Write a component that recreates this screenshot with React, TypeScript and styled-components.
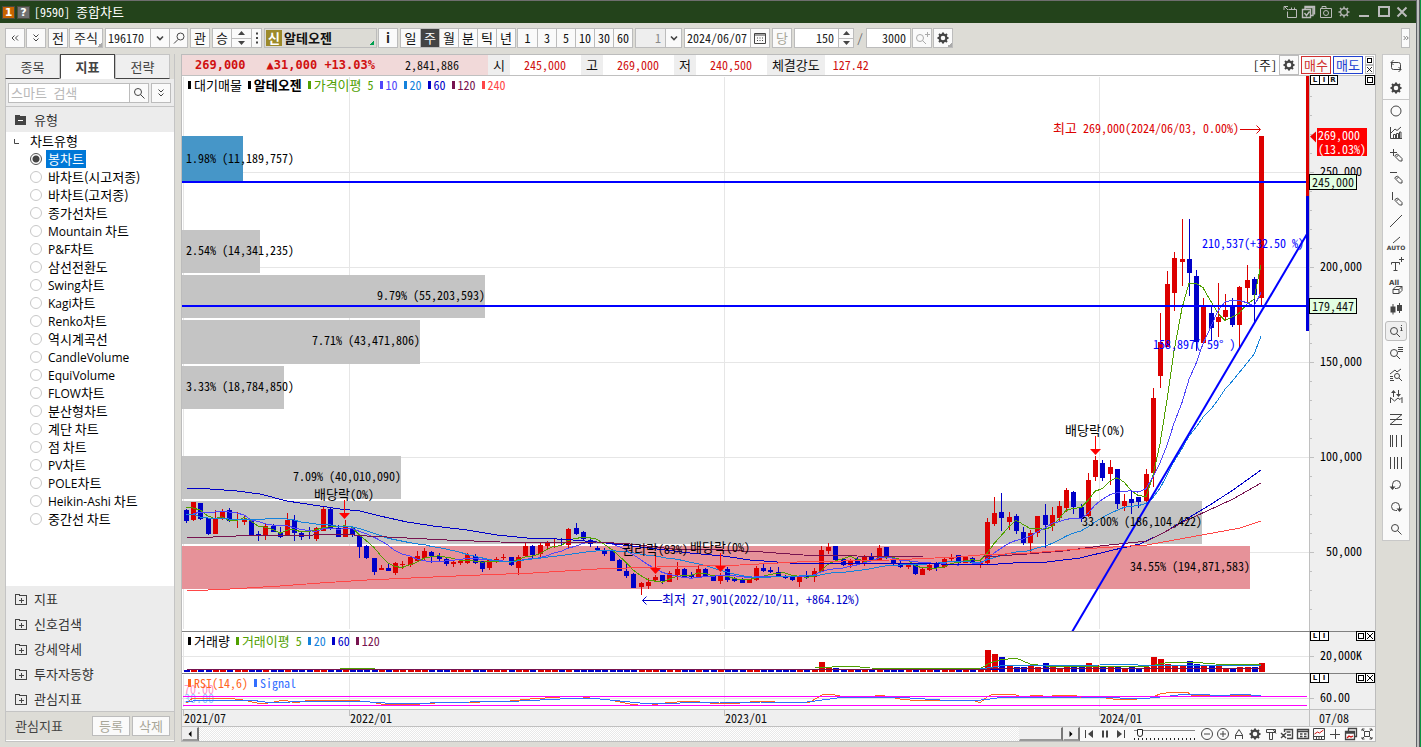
import React from 'react';
import styled, { createGlobalStyle, css } from 'styled-components';

const MONO = `"Noto Sans Mono CJK KR", "Noto Sans CJK KR", sans-serif`;
const SANS = `"Noto Sans CJK KR", "Noto Sans", sans-serif`;

const UP = '#dc0000';
const DOWN = '#0000c8';
const MA = { m5: '#50a000', m10: '#5046fa', m20: '#1482dc', m60: '#0000c8', m120: '#781450', m240: '#ff4646' };

const GlobalStyle = createGlobalStyle`
  * { box-sizing: border-box; }
  body { margin: 0; background: #dddcd6; font: 12px/16px ${MONO}; color: #111; }
  button, input { font: inherit; color: inherit; margin: 0; padding: 0; border-radius: 0; }
  svg { flex: none; overflow: visible; }
  text { font: 12px ${MONO}; white-space: pre; }
`;

const Ko = styled.span`
  font-size: 13px;
`;

/* ---------- window shell ---------- */

const Desktop = styled.div`
  display: flex;
  min-height: 100vh;
`;
const WindowBox = styled.div`
  flex: 1;
  min-width: 0;
  display: flex;
  flex-direction: column;
`;
const WindowEdge = styled.div`
  width: 5px;
  background: linear-gradient(90deg, #5f6368 0 1px, #c0c0c0 1px 3px, #55585c 3px 4px, #0a9440 4px 5px);
`;
const TitleBar = styled.header`
  display: flex;
  align-items: center;
  gap: 2px;
  height: 23px;
  padding: 0 6px 0 2px;
  border-top: 1px solid #6e6e6e;
  background: #23431b;
  color: #fff;
`;
const TitleBadge = styled.span<{ $bg: string }>`
  width: 13px;
  height: 13px;
  background: ${(p) => p.$bg};
  border: 1px solid #4a4a40;
  font: bold 11px/12px "DejaVu Sans", sans-serif;
  text-align: center;
`;
const Title = styled.h1`
  flex: 1;
  margin: 0 0 0 2px;
  font: 12px/16px ${MONO};
`;
const BareButton = styled.button<{ $w?: number }>`
  display: flex;
  align-items: center;
  justify-content: center;
  width: ${(p) => p.$w ?? 16}px;
  height: 16px;
  border: 0;
  background: none;
`;

/* ---------- toolbar ---------- */

const Toolbar = styled.div`
  display: flex;
  align-items: center;
  gap: 2px;
  height: 31px;
  padding: 0 6px 1px 5px;
`;
const Tight = styled.div`
  display: flex;
  gap: 1px;
`;
const ToolButton = styled.button<{ $w?: number; $dim?: boolean; $corner?: boolean }>`
  display: flex;
  align-items: center;
  justify-content: center;
  flex: none;
  width: ${(p) => p.$w ?? 20}px;
  height: 20px;
  border: 1px solid #bcbcbc;
  background: ${(p) =>
    p.$corner ? 'linear-gradient(135deg, transparent 50%, #aaa 50%) right bottom / 5px 5px no-repeat, #fafafa' : '#fafafa'};
  color: ${(p) => (p.$dim ? '#a8a698' : '#222')};
  font-size: 13px;
`;
const Segments = styled.div`
  display: flex;
  height: 20px;
  border: 1px solid #bcbcbc;
  background: #fafafa;
  && > * + * { border-left: 1px solid #bcbcbc; }
`;
const Segment = styled.button<{ $w?: number; $on?: boolean }>`
  display: flex;
  align-items: center;
  justify-content: center;
  width: ${(p) => p.$w ?? 19}px;
  border: 0;
  background: ${(p) => (p.$on ? '#444' : '#fafafa')};
  color: ${(p) => (p.$on ? '#fff' : '#111')};
`;
const Field = styled.input<{ $w: number; $right?: boolean; $dim?: boolean }>`
  width: ${(p) => p.$w}px;
  border: 0;
  padding: 0 ${(p) => (p.$right ? 4 : 2)}px;
  outline: 0;
  background: ${(p) => (p.$dim ? '#eee' : '#fff')};
  color: ${(p) => (p.$dim ? '#888' : '#222')};
  text-align: ${(p) => (p.$right ? 'right' : 'left')};
`;
const Spinner = styled.div<{ $w: number }>`
  display: flex;
  flex-direction: column;
  width: ${(p) => p.$w}px;
  button { flex: 1; display: flex; align-items: center; justify-content: center; border: 0; background: #fafafa; }
  button + button { border-top: 1px solid #bcbcbc; }
`;
const StockBox = styled.div`
  display: flex;
  align-items: center;
  gap: 2px;
  width: 113px;
  height: 20px;
  padding-left: 1px;
  border: 1px solid #bcbcbc;
  background: linear-gradient(135deg, transparent 50%, #00a050 50%) 105px 12px / 4px 4px no-repeat, #dcdbd5;
  font-size: 13px;
  font-weight: bold;
`;
const NewBadge = styled.span`
  width: 16px;
  height: 16px;
  background: #9c8a2a;
  color: #fff;
  text-align: center;
`;
const Slash = styled.span`
  width: 8px;
  text-align: center;
  color: #666;
`;
const Spring = styled.div`
  flex: 1;
`;

/* ---------- body ---------- */

const Body = styled.div`
  flex: 1;
  display: flex;
  align-items: stretch;
  gap: 6px;
  padding: 0 6px 5px 5px;
`;
const Sidebar = styled.aside`
  display: flex;
  flex-direction: column;
  width: 170px;
  border: 1px solid #c4c4c4;
  border-top: 0;
  font-size: 13px;
`;
const Tabs = styled.div`
  display: flex;
  height: 25px;
  margin: 0 4px 0 -1px;
`;
const Tab = styled.button<{ $on?: boolean }>`
  flex: 1;
  border: 1px solid ${(p) => (p.$on ? '#444' : '#c4c4c4')};
  border-bottom-color: ${(p) => (p.$on ? '#fff' : '#444')};
  background: ${(p) => (p.$on ? '#fff' : '#efefef')};
  color: #444;
  ${(p) => p.$on && css`font-weight: bold;`}
`;
const SearchRow = styled.div`
  display: flex;
  gap: 2px;
  padding: 4px 2px 3px;
  border-bottom: 1px solid #c4c4c4;
  background: #ececec;
  input::placeholder { color: #b8b8b8; opacity: 1; }
`;
const GroupButton = styled.button`
  display: flex;
  align-items: center;
  gap: 7px;
  width: 100%;
  height: 25px;
  padding-left: 9px;
  border: 0;
  background: #ececec;
  color: #333;
`;
const Tree = styled.div`
  flex: 1;
  padding: 0 0 0 24px;
  background: #fff;
  font: 13px/18px ${SANS};
  color: #000;
`;
const TreeRoot = styled.div`
  display: flex;
  align-items: center;
  gap: 11px;
  height: 18px;
  margin-left: -16px;
`;
const TreeItem = styled.label`
  display: flex;
  align-items: center;
  gap: 4px;
  height: 18px;
  > span { padding: 0 2px; white-space: pre; }
  input:checked + span { background: #0078d7; color: #fff; }
`;
const Latin = styled.span`
  font: 12px/16px "Open Sans", sans-serif;
`;
const Radio = styled.input`
  appearance: none;
  width: 12px;
  height: 12px;
  border: 1px solid #c8c8c8;
  border-radius: 50%;
  &:checked { border-color: #555; background: radial-gradient(circle, #444 0 3px, #fff 4px); }
`;
const SideFooter = styled.div`
  display: flex;
  align-items: center;
  gap: 2px;
  height: 30px;
  padding: 0 4px 0 9px;
  border-top: 1px solid #c4c4c4;
  border-bottom: 1px solid #fff;
  color: #444;
`;

/* ---------- chart ---------- */

const ChartFrame = styled.main`
  flex: 1;
  min-width: 0;
  display: flex;
  flex-direction: column;
  border: 1px solid #bcbcbc;
  background: #fff;
`;
const InfoBar = styled.div`
  display: flex;
  align-items: center;
  height: 21px;
  border-bottom: 1px solid #c0c0c0;
`;
const Quote = styled.div`
  display: flex;
  align-items: center;
  gap: 21px;
  width: 306px;
  height: 20px;
  padding-left: 13px;
  background: #f1d9d9;
  b { font: bold 12px/20px "DejaVu Sans Mono", monospace; color: #d01010; }
  span { margin-left: 9px; }
`;
const InfoLabel = styled.div`
  height: 20px;
  padding: 0 5px;
  background: #eee;
  font-size: 13px;
  line-height: 20px;
`;
const InfoValue = styled.div<{ $w?: number }>`
  width: ${(p) => p.$w ?? 71}px;
  padding-right: 15px;
  text-align: right;
  color: #d01010;
`;
const OrderButton = styled.button<{ $c: string }>`
  width: 30px;
  height: 18px;
  border: 1px solid ${(p) => p.$c};
  background: #fafafa;
  color: ${(p) => p.$c};
  font-size: 13px;
`;
const InfoTools = styled.div`
  display: flex;
  align-items: center;
  gap: 2px;
  margin-left: auto;
  padding-right: 1px;
`;
const MiniStack = styled.div`
  display: flex;
  flex-direction: column;
  button { display: flex; width: 9px; height: 9px; border: 1px solid #bcbcbc; background: #fff; align-items: center; justify-content: center; }
`;
const Pane = styled.section<{ $h?: number }>`
  position: relative;
  display: flex;
  ${(p) => (p.$h ? css`height: ${p.$h}px;` : css`flex: 1; min-height: 555px;`)}
  border-bottom: 1px solid ${(p) => (p.$h === 36 ? '#c0c0c0' : '#808080')};
`;
const Plot = styled.div`
  position: relative;
  flex: 1;
  min-width: 0;
  overflow: hidden;
  > svg { position: absolute; width: 100%; height: 100%; }
`;
const Axis = styled.div`
  position: relative;
  width: 66px;
  border-left: 1px solid #c0c0c0;
  background: #efefef;
  > svg { display: block; width: 100%; height: 100%; }
`;
const Legend = styled.div`
  position: absolute;
  top: 1px;
  left: 6px;
  display: flex;
  gap: 6px;
`;
const LegendItem = styled.span<{ $c: string; $bold?: boolean }>`
  display: flex;
  align-items: center;
  gap: 3px;
  color: ${(p) => p.$c};
  font-weight: ${(p) => (p.$bold ? 'bold' : 'normal')};
  white-space: pre;
  &::before { content: ''; width: 3px; height: 8px; background: currentColor; }
`;
const PaneButtons = styled.div<{ $right?: boolean }>`
  position: absolute;
  top: -1px;
  ${(p) => (p.$right ? 'right: 0;' : 'left: 0;')}
  display: flex;
  button {
    display: flex;
    align-items: center;
    justify-content: center;
    width: 10px;
    height: 10px;
    border: 1px solid #000;
    background: #fff;
    font: bold 7px/8px "DejaVu Sans", sans-serif;
  }
  button + button { margin-left: -1px; }
`;
const LevelTag = styled.span<{ $y: number }>`
  position: absolute;
  left: -1px;
  top: ${(p) => p.$y}px;
  height: 16px;
  padding: 0 2px;
  border: 1px solid #000;
  background: #e2ffe2;
  line-height: 14px;
`;
const LastTag = styled.span`
  position: absolute;
  left: 7px;
  top: 52px;
  width: 50px;
  padding: 0 1px;
  background: #f00;
  color: #fff;
  line-height: 14px;
`;
const DateRow = styled.div`
  display: flex;
  height: 17px;
  border-bottom: 1px solid #c0c0c0;
  background: #efefef;
`;
const DateTicks = styled.div`
  position: relative;
  flex: 1;
`;
const DateLabel = styled.span<{ $x: number }>`
  position: absolute;
  left: ${(p) => p.$x}px;
  padding-left: 1px;
  &::before { content: ''; position: absolute; left: 0; top: 0; width: 1px; height: 6px; background: #c0c0c0; }
`;
const DateEnd = styled.div`
  width: 66px;
  padding-left: 9px;
  border-left: 1px solid #c0c0c0;
`;
const ScrollRow = styled.div`
  display: flex;
  align-items: stretch;
  height: 14px;
  background: #fff;
`;
const ScrollButton = styled.button<{ $w: number }>`
  display: flex;
  align-items: center;
  justify-content: center;
  width: ${(p) => p.$w}px;
  border: 1px solid #eee;
  border-right: 2px solid #777;
  border-bottom: 2px solid #999;
  background: #efefef;
`;
const Track = styled.div`
  flex: 1;
  background: repeating-conic-gradient(#e8e8e8 0 25%, #fff 0 50%) 0 0 / 2px 2px;
`;
const BottomTools = styled.div`
  display: flex;
  align-items: center;
  width: 295px;
  padding-left: 1px;
  background: #fafafa;
`;
const RangeBox = styled.div`
  width: 62px;
  height: 14px;
  margin: 0 4px 0 5px;
  background:
    repeating-linear-gradient(90deg, #222 0 1px, transparent 1px 4px) 0 11px / 100% 2px no-repeat,
    linear-gradient(#888, #888) 0 3px / 100% 1px no-repeat;
  input {
    appearance: none;
    display: block;
    width: 100%;
    height: 9px;
    margin: 1px 0 0;
    background: none;
  }
  input::-webkit-slider-thumb {
    appearance: none;
    width: 6px;
    height: 8px;
    border: 1px solid #222;
    border-radius: 0 0 3px 3px;
    background: #fff;
  }
`;
const RightBar = styled.nav`
  align-self: flex-start;
  display: flex;
  flex-direction: column;
  width: 28px;
  border: 1px solid #c8c8c8;
  background: #fafafa;
`;
const RightButton = styled.button<{ $on?: boolean; $line?: boolean }>`
  display: flex;
  align-items: center;
  justify-content: center;
  height: ${(p) => (p.$line ? 23 : 22)}px;
  border: 0;
  border-bottom: ${(p) => (p.$line ? '1px solid #c8c8c8' : '0')};
  background: none;
  ${(p) =>
    p.$on &&
    css`
      margin: 1px 2px;
      height: 20px;
      border: 1px solid #bcbcbc;
      border-radius: 3px;
      background: #efefef;
    `}
`;

/* ---------- icons ---------- */

type IconProps = { d: string; fill?: string; size?: number; color?: string; w?: number; children?: React.ReactNode };
const Icon = ({ d, fill, size = 16, color = '#444', w = 1, children }: IconProps) => (
  <svg width={size} height={size} viewBox="0 0 16 16" fill="none" stroke={color} strokeWidth={w} aria-hidden="true">
    <path d={d} />
    {fill && <path d={fill} fill={color} stroke="none" />}
    {children}
  </svg>
);
const GEAR = 'M8 2.5v2M8 11.5v2M2.5 8h2M11.5 8h2M4 4l1.5 1.5M10.500 10.500l1.500 1.500M12 4l-1.500 1.500M5.500 10.500l-1.500 1.500';
const Gear = ({ color = '#444', thin }: { color?: string; thin?: boolean }) => (
  <Icon d={GEAR} color={color} w={thin ? 1.5 : 2}>
    <circle cx="8" cy="8" r="3.400" strokeWidth={thin ? 1.2 : 2.2} />
  </Icon>
);
const Caret = ({ down }: { down?: boolean }) => (
  <svg width="7" height="4" viewBox="0 0 7 4" aria-hidden="true">
    <path d={down ? 'M0 0h7L3.500 4z' : 'M0 4h7L3.500 0z'} fill="#444" />
  </svg>
);
const MAG = 'M10.500 7a3.500 3.500 0 1 1-7 0a3.500 3.500 0 1 1 7 0zM9.500 9.500l4 4';
const MAG_LOW = 'M9.500 8a3.500 3.500 0 1 1-7 0a3.500 3.500 0 1 1 7 0zM8.500 10.500l3.500 3.500';
const PEN = 'M7 8.500l2.500-1.500l4.500 4.500v2.500h-2.500l-4.500-4.500zM8.500 10l2-2';
const FolderPlus = () => (
  <svg width="12" height="12" viewBox="0 0 12 12" fill="none" stroke="#444" shapeRendering="crispEdges" aria-hidden="true">
    <path d="M.5 1.500h4v1h7v9H.5zM3.500 7h5M6 4.500v5" />
  </svg>
);

const rightTools: { name: string; node: React.ReactNode; line?: boolean; on?: boolean }[] = [
  { name: '새로고침', node: <Icon d="M3.500 5v4.500q0 2 2 2H13M10.500 9l2.500 2.500l-2.500 2.500M12.500 11V6.500q0-2-2-2H3M5.500 2L3 4.500L5.500 7" /> },
  { name: '설정', node: <Gear />, line: true },
  { name: '원', node: <Icon d="M13 8a5 5 0 1 1-10 0a5 5 0 1 1 10 0z" /> },
  { name: '차트', node: <Icon d="M2.500 2v11.500H14M3 8l4-4l2 1.500L13 2M5.500 13V9.500h2V13M8.500 13V8.500h2V13M11.500 13V7h1.500v6" /> },
  { name: '추가', node: <Icon d={`M2 5.500h7M5.500 2v7${PEN}`} /> },
  { name: '수평', node: <Icon d={`M2 3.500h7${PEN}`} /> },
  { name: '수직', node: <Icon d={`M4.500 1v8${PEN}`} /> },
  { name: '추세선', node: <Icon d="M2 14L14 2" /> },
  {
    name: '자동',
    node: (
      <Icon d="M5 8l7-6">
        <text x="8" y="15" textAnchor="middle" fill="#444" stroke="none" style={{ font: 'bold 6px "DejaVu Sans", sans-serif' }}>AUTO</text>
      </Icon>
    ),
  },
  { name: '문자', node: <Icon d="M3.500 7.500V5.500h8v2M7.500 5.500v8M5.500 13.500h4M11 2.500h5M13.500 0v5" /> },
  {
    name: '전체 지우기',
    node: (
      <Icon d="M5 10.500l3-3h6l-3 3zM5 10.500v4h6l3-3v-4M11 10.500v4">
        <text x="1" y="6" fill="#444" stroke="none" style={{ font: 'bold 7px "DejaVu Sans", sans-serif' }}>All</text>
      </Icon>
    ),
  },
  { name: '봉', node: <Icon d="M5 3v10.500M11.500 2v10" fill="M2.500 5.500h5v6h-5zM9 4h5v6H9z" /> },
  { name: '정보', node: <Icon d={`${MAG_LOW}M13.500 2v1M12.500 4.500h1v3M12.500 7.500h2`} />, on: true },
  { name: '목록', node: <Icon d={`${MAG_LOW}M10 2.500h5M10 4.500h5M10 6.500h5`} /> },
  { name: '분석', node: <Icon d="M2 7l5-4l2 2l4-3M2 9.500h3M2 11.500h3M2 13.500h4M11.500 9a2.500 2.500 0 1 1-5 0a2.500 2.500 0 1 1 5 0zM11 11l3 3" /> },
  { name: '전환', node: <Icon d="M2.500 14V8.500l4 3.500l3.500-3l2 1.500l2-2V14" fill="M5 8V4H3l2.500-3L8 4H6v4zM10 1h1v4h2l-2.500 3L8 5h2z" /> },
  { name: '피보나치', node: <Icon d="M2 3.500h12L2 13.500h12M2 8.500h12" /> },
  { name: '간격 1', node: <Icon d="M2.500 2v12M4.500 2v12M8.500 2v12M13.500 2v12" /> },
  { name: '간격 2', node: <Icon d="M2.500 2v12M6.500 2v12M9.500 2v12M13.500 2v12" /> },
  { name: '실행 취소', node: <Icon d="M4.500 10V7.500a4 4 0 1 1 4 4H7" fill="M1.500 9.500h6l-3 3.500z" /> },
  { name: '다시 실행', node: <Icon d="M11.500 10V7.500a4 4 0 1 0-4 4H9" fill="M8.500 9.500h6l-3 3.500z" /> },
  { name: '확대', node: <Icon d={MAG} /> },
];

const bottomTools: { name: string; node: React.ReactNode }[] = [
  { name: '축소', node: <Icon d="M13.500 8a5.500 5.500 0 1 1-11 0a5.500 5.500 0 1 1 11 0zM5 8h6" /> },
  { name: '확대', node: <Icon d="M13.500 8a5.500 5.500 0 1 1-11 0a5.500 5.500 0 1 1 11 0zM5 8h6M8 5v6" /> },
  { name: '글자', node: <Icon d="M4.500 13V9L8 3.500L11.500 9v4M4.500 9.500h7" /> },
  { name: '설정', node: <Gear /> },
  { name: '꾸미기', node: <Icon d="M3.500 6.500v-3h9v3h-9M10 3.500l3 4M6.500 6.500v7h3v-7" /> },
  { name: '내보내기', node: <Icon d="M5.500 6V3.500h8v9H8M7.500 6h4M8 9h4M2 7l5 5M7 7l-5 5" w={1.4} /> },
  { name: '목록', node: <Icon d="M2.500 3.500h11v9h-11zM2.500 5.500h11M5 8h2.500M5 10.500h2.500M9 8h2.500M9 10.500h2.500" w={1.4} /> },
  {
    name: '차트',
    node: (
      <Icon d="M2.500 2.500h11v11h-11zM2.500 10.500h11M5.500 11v2M8 11v2M10.500 11v2">
        <path d="M3.500 8l3-2l2 1l4-3" stroke="#d01010" />
      </Icon>
    ),
  },
  { name: '십자선', node: <Icon d="M3 8.500h10M8.500 3v10" /> },
  {
    name: '창',
    node: (
      <Icon d="M5.500 5V2.500h8v8H12M2.500 5.500h9v8h-9zM2.500 7h9" w={1.300}>
        <path d="M4 12l2-2l2 1l2-1" stroke="#d01010" />
      </Icon>
    ),
  },
  { name: '전체 화면', node: <Icon d="M3 5V3h2.500M10.500 3H13v2M13 11v2h-2.500M5.500 13H3v-2M5.500 5.500h5v5h-5zM3 3l2.500 2.500M13 3l-2.500 2.500M3 13l2.500-2.500M13 13l-2.500-2.500" /> },
];

/* ---------- data ---------- */

const treeItems = [
  '봉차트', '바차트(시고저종)', '바차트(고저종)', '종가선차트', 'Mountain 차트', 'P&F차트', '삼선전환도',
  'Swing차트', 'Kagi차트', 'Renko차트', '역시계곡선', 'CandleVolume', 'EquiVolume', 'FLOW차트',
  '분산형차트', '계단 차트', '점 차트', 'PV차트', 'POLE차트', 'Heikin-Ashi 차트', '중간선 차트',
];
const groups = ['지표', '신호검색', '강세약세', '투자자동향', '관심지표'];

/* Weekly candles: u/d, body top, body bottom, high, low, in ticks (3 per pixel) below each block's base line. */
const TICKS_PER_PX = 3;
const candleBlocks: { base: number; rows: string }[] = [
  {
    base: 440,
    rows: `d 210 242 207 248;u 186 240 186 242;d 189 237 189 239;d 234 282 234 285;u 234 282 210 282;u 213 237 207 240;
d 210 242 205 246;u 238 241 216 264;u 237 246 228 255;d 237 287 237 287;d 282 286 273 303;u 258 287 252 300;
d 258 276 252 276;d 276 291 261 294;u 240 287 219 287;d 240 279 225 303;d 279 291 273 300;d 270 273 261 297;
u 264 297 261 303;u 207 272 198 272;d 207 267 201 270;d 264 291 255 291;u 258 291 240 291;d 265 284 258 291;
d 285 321 282 354;d 318 354 315 357;d 354 396 354 405;u 384 390 375 390;d 384 393 369 393;u 369 399 366 405;
u 372 375 363 387;u 351 376 348 381;u 348 363 333 366;u 333 354 324 360;d 336 348 333 369;d 347 357 339 363;
d 357 372 350 378;u 366 372 360 381;u 363 370 360 375;u 345 369 339 372;d 348 370 342 372;d 363 387 363 396;
u 360 384 357 390;u 358 366 351 369;u 351 354 342 360;d 351 375 351 378;u 351 384 345 405;u 318 348 309 351;
d 318 346 315 354;u 315 342 306 351;u 310 319 303 330;u 306 310 297 324;d 306 310 294 315;u 267 315 264 324;
d 264 282 249 285;d 276 297 273 300;d 300 312 297 321`,
  },
  {
    base: 480,
    rows: `d 205 210 198 214;d 210 222 205 227;d 213 243 213 243;d 240 272 237 273;d 273 287 252 294;d 282 324 280 324;
u 309 321 306 345;u 306 318 294 327;u 291 300 285 306;d 285 303 285 312;u 279 306 273 306;u 267 285 246 300;
d 267 291 264 293;d 284 290 276 294;u 267 291 258 293;d 267 288 264 291;d 285 303 285 303;u 285 303 280 312;
d 267 300 261 306;d 294 302 291 306;d 300 309 295 309;u 297 309 297 309;u 264 300 258 303;d 264 273 252 277;
d 270 276 262 280;d 276 287 261 287;d 288 294 285 298;d 288 300 286 304;u 288 306 285 321;d 288 291 273 297;
u 273 291 264 306;u 210 276 198 276;u 201 213 189 222;d 198 240 198 242;d 237 255 234 258;u 240 255 237 264;
d 237 249 231 252;u 231 252 226 258;d 228 240 219 242;u 204 243 195 243;d 201 234 201 237;d 237 252 234 256;
d 249 261 238 264;u 255 261 249 267;d 254 282 250 285;u 267 285 261 285;u 255 269 252 274;d 252 264 246 272;
u 237 261 234 264;u 231 237 222 243;d 225 249 225 252;u 231 249 228 250;d 234 249 232 250;u 249 255 240 264`,
  },
  {
    base: 380,
    rows: `u 426 548 414 552;u 399 431 351 437;d 396 414 339 453;u 411 426 396 450;d 408 453 402 462;d 456 489 441 494;
u 459 489 450 515;u 408 459 408 470;d 405 435 372 503;u 405 438 381 452;u 378 414 363 423;u 330 384 324 395;
d 336 381 333 402;d 381 417 372 426;u 300 408 279 410;u 240 290 228 303;d 249 294 240 303;u 261 282 240 315;
d 267 372 267 387;u 363 378 342 393;d 357 368 330 402;d 351 366 351 384;u 282 363 267 370;u 54 279 24 321`,
  },
  {
    base: 110,
    rows: `u 696 798 609 834;u 522 711 483 711;u 444 549 426 603;u 447 456 327 528;d 447 489 327 558;d 498 696 480 722;
u 588 699 564 700;d 609 654 588 690;u 621 636 519 681;u 600 621 552 633;d 588 645 564 651;u 531 645 528 711;
u 510 534 465 582;d 507 555 501 637;u 78 564 78 588`,
  },
];
type Candle = { up: boolean; top: number; bottom: number; high: number; low: number; close: number };
const candles: Candle[] = candleBlocks.flatMap(({ base, rows }) =>
  rows.split(';').map((row) => {
    const [kind, ...ticks] = row.trim().split(' ');
    const [top, bottom, high, low] = ticks.map((t) => base + Number(t) / TICKS_PER_PX);
    const up = kind === 'u';
    return { up, top, bottom, high, low, close: up ? top : bottom };
  }),
);
const candleX = (i: number) => Math.round(184 + i * 7.215);

/* Averages over the loaded weeks; the first weeks use values carried over from earlier history. */
const average = (n: number, lead: number[]) =>
  candles
    .map((_, i) => {
      if (i < lead.length) return `${candleX(i) + 2},${lead[i]}`;
      const win = candles.slice(i - n + 1, i + 1);
      return `${candleX(i) + 2},${(win.reduce((s, c) => s + c.close, 0) / n).toFixed(1)}`;
    })
    .join(' ');
const ma5 = average(5, [507, 508, 510, 516]);
const ma10 = average(10, [514, 514, 512, 512, 512, 511, 512, 513, 515]);
const ma20 = average(20, [514, 514, 517, 518, 518, 518, 519, 519, 519, 519, 519, 519, 518, 518, 519, 520, 522, 523, 524]);
const ma60 =
  '187,488 210,489 237,491 260,494 287,501 313,505 340,509 360,511 380,516 407,522 433,526 467,530 497,535 527,538 557,539 573,540 597,542 623,545 657,549 690,553 723,556 750,560 777,562 803,564 843,563 890,563 940,564 983,565 1013,563 1047,562 1080,558 1113,550 1140,544 1163,533 1183,521 1210,505 1233,490 1261,470';
const ma120 =
  '187,538 213,537 260,535 313,535 340,534 367,536 407,538 447,540 500,542 547,543 597,542 630,544 673,549 723,550 763,552 803,555 857,556 923,557 983,557 1027,554 1063,551 1100,546 1147,541 1163,533 1183,522 1207,511 1233,499 1261,483';
const ma240 =
  '187,591 230,589 280,586 320,583 367,580 433,577 480,575 533,573 597,569 657,567 740,565 797,562 890,560 957,557 980,555 1030,553 1080,549 1147,545 1180,539 1213,533 1240,528 1261,521';

const profile = [
  { y: 136, h: 45, x2: 243, label: '1.98% (11,189,757)', tx: 186, fill: '#4696c8' },
  { y: 230, h: 43, x2: 260, label: '2.54% (14,341,235)', tx: 186 },
  { y: 275, h: 43, x2: 485, label: '9.79% (55,203,593)', tx: 377 },
  { y: 320, h: 44, x2: 420, label: '7.71% (43,471,806)', tx: 312 },
  { y: 366, h: 43, x2: 284, label: '3.33% (18,784,850)', tx: 186 },
  { y: 456, h: 43, x2: 401, label: '7.09% (40,010,090)', tx: 293 },
  { y: 501, h: 43, x2: 1202, label: '33.00% (186,104,422)', tx: 1082 },
  { y: 546, h: 43, x2: 1250, label: '34.55% (194,871,583)', tx: 1130, fill: '#e69299' },
];
const events = [
  { x: 344, y: 494, tx: 314, name: '배당락', rate: '(0%)' },
  { x: 655, y: 549, tx: 622, name: '권리락', rate: '(83%)' },
  { x: 720, y: 547, tx: 690, name: '배당락', rate: '(0%)' },
  { x: 1095, y: 430, tx: 1065, name: '배당락', rate: '(0%)' },
];
const recentVolumes = [22, 18, 15, 6, 5, 5, 7, 5, 9, 5, 4, 5, 5, 5, 9, 7, 6, 6, 6, 4, 5, 4, 5, 15, 13, 8, 7, 7, 11, 8, 7, 7, 6, 3, 4, 5, 5, 5, 9];
const spikes: Record<number, number> = { 22: 4, 53: 3, 88: 10, 89: 5, 90: 4, 96: 4 };
const volumeOf = (i: number) => (i >= 111 ? recentVolumes[i - 111] : spikes[i] ?? 2);
const rsi =
  '186,703 193,698 213,698 227,698 243,700 257,703 268,703 285,700 295,703 310,700 333,700 350,700 370,702 387,705 420,704 450,702 480,702 510,701 530,699 560,697 575,696 590,698 610,700 630,704 645,706 665,703 690,701 710,703 740,703 760,701 790,703 810,702 822,695 830,694 845,697 870,697 880,695 900,699 920,701 940,700 973,700 980,703 987,697 993,694 1012,694 1023,697 1038,695 1047,697 1057,695 1073,695 1080,697 1100,697 1113,699 1137,699 1150,698 1160,694 1173,692 1187,692 1193,696 1220,695 1237,695 1261,696';
const signal =
  '186,702 200,700 225,700 250,700 265,702 290,702 320,701 350,701 370,702 400,704 430,703 470,702 520,701 560,699 590,698 620,701 650,704 680,703 720,702 760,702 800,703 822,700 845,697 880,697 910,698 940,700 973,701 990,699 1005,697 1040,697 1080,697 1120,698 1150,698 1170,696 1187,694 1200,694 1220,696 1240,694 1261,696';

/* The three panes share one coordinate system, so each pane shifts its drawing to its own corner. */
const PLOT_LEFT = 182;
const Shift = ({ top, children }: { top: number; children: React.ReactNode }) => (
  <svg>
    <g transform={`translate(${-PLOT_LEFT} ${-top})`}>{children}</g>
  </svg>
);
const GridV = ({ top, h }: { top: number; h: number }) => (
  <g fill="#e6e6e6">
    {[183, 349, 724, 1099].map((x) => (
      <rect key={x} x={x} y={top + 1} width="1" height={h - 3} />
    ))}
  </g>
);

const line = (points: string, color: string) => (
  <polyline points={points} fill="none" stroke={color} strokeWidth="1" shapeRendering="crispEdges" />
);

const PricePlot = () => (
  <Shift top={76}>
    <GridV top={76} h={555} />
    {[172, 267, 362, 457, 552].map((y) => (
      <rect key={y} x={PLOT_LEFT} y={y} width="100%" height="1" fill="#e6e6e6" />
    ))}
    {profile.map((b) => (
      <rect key={b.y} x={PLOT_LEFT} y={b.y} width={b.x2 - PLOT_LEFT} height={b.h} fill={b.fill ?? '#c4c4c4'} />
    ))}
    {candles.map((c, i) => {
      const x = candleX(i);
      const top = Math.round(c.top);
      const high = Math.round(c.high);
      return (
        <g key={i} fill={c.up ? UP : DOWN}>
          <rect x={x + 2} y={high} width="1" height={Math.max(1, Math.round(c.low) - high)} />
          <rect x={x} y={top} width="5" height={Math.max(1, Math.round(c.bottom) - top)} />
        </g>
      );
    })}
    {line(ma5, MA.m5)}
    {line(ma10, MA.m10)}
    {line(ma20, MA.m20)}
    {line(ma60, MA.m60)}
    {line(ma120, MA.m120)}
    {line(ma240, MA.m240)}
    <rect x={PLOT_LEFT} y="181" width="1125" height="2" fill="#0000ff" />
    <rect x={PLOT_LEFT} y="305" width="1125" height="2" fill="#0000ff" />
    <path d="M1072 632L1307 234" stroke="#0000ff" strokeWidth="2" />
    {profile.map((b) => (
      <text key={b.y} x={b.tx} y={b.y === 136 ? 163 : b.y + 25}>{b.label}</text>
    ))}
    {events.map((e) => (
      <g key={e.x}>
        <rect x={e.x} y={e.y + 6} width="1" height="14" fill="#ff0000" />
        <path d={`M${e.x - 5} ${e.y + 19}h11l-5.500 6z`} fill="#ff0000" />
        <text x={e.tx} y={e.y + 5}><tspan fontSize="13">{e.name}</tspan>{e.rate}</text>
      </g>
    ))}
    <text x="662" y="604" fill={DOWN}><tspan fontSize="13">최저</tspan> 27,901(2022/10/11, +864.12%)</text>
    <path d="M642.500 600.500H662M646.500 596.500l-4 4l4 4" fill="none" stroke={DOWN} />
    <text x="1053" y="133" fill={UP}><tspan fontSize="13">최고</tspan> 269,000(2024/06/03, 0.00%)</text>
    <path d="M1240 129.500h20M1256.500 125.500l4 4l-4 4" fill="none" stroke={UP} />
    <text x="1202" y="248" fill="#0000ff">210,537(+32.50 %)</text>
    <text x="1153" y="349" fill="#0000ff">158,897( 59° )</text>
    <rect x="1306" y="76" width="3" height="120" fill={UP} />
    <rect x="1306" y="196" width="3" height="135" fill="#0000dc" />
  </Shift>
);

const VolumePlot = () => (
  <Shift top={632}>
    <GridV top={632} h={41} />
    <rect x={PLOT_LEFT} y="656" width="100%" height="1" fill="#e6e6e6" />
    {candles.map((c, i) => (
      <rect key={i} x={candleX(i)} y={672 - volumeOf(i)} width="6" height={volumeOf(i)} fill={c.up ? UP : DOWN} />
    ))}
    {line('340,668 375,668', MA.m5)}
    {line('815,668 850,666 870,668 980,669 990,663 1000,660 1016,658 1030,664 1045,666 1100,667 1150,666 1165,663 1190,662 1215,664 1261,665', MA.m5)}
    {line('187,670 980,669 1000,666 1100,665 1125,664 1150,666 1261,665', MA.m20)}
    {line('990,670 1010,668 1261,668', MA.m60)}
    {line('187,669 990,669 1261,668', MA.m120)}
  </Shift>
);

const RsiPlot = () => (
  <Shift top={674}>
    <GridV top={674} h={35} />
    <rect x={PLOT_LEFT} y="698" width="100%" height="1" fill="#e6e6e6" />
    <text x="184" y="694" fill="#ff96c8">70.00</text>
    <text x="184" y="703" fill="#96c8ff">30.00</text>
    {line(rsi, '#ff6420')}
    {line(signal, '#326eff')}
    <rect x="183" y="696" width="1124" height="1" fill="#ff00ff" />
    <rect x="183" y="705" width="1124" height="1" fill="#ff00ff" />
  </Shift>
);

const priceTicks = Array.from({ length: 29 }, (_, i) => 1 + i * 19);
const priceLabels = ['250,000', '200,000', '150,000', '100,000', '50,000'];

const Square = ({ size = 6 }: { size?: number }) => (
  <svg width={size} height={size} aria-hidden="true">
    <rect x=".5" y=".5" width={size - 1} height={size - 1} fill="none" stroke="#000" />
  </svg>
);
const Cross = ({ size = 6 }: { size?: number }) => (
  <svg width={size} height={size} viewBox="0 0 6 6" aria-hidden="true">
    <path d="M0 0l6 6M6 0l-6 6" fill="none" stroke="#000" />
  </svg>
);
const SubPaneButtons = () => (
  <>
    <PaneButtons>
      <button>L</button>
      <button>I</button>
    </PaneButtons>
    <PaneButtons $right>
      <button aria-label="최대화"><Square /></button>
      <button aria-label="닫기"><Cross /></button>
    </PaneButtons>
  </>
);

const SpinButtons = ({ w }: { w: number }) => (
  <Spinner $w={w}>
    <button aria-label="증가"><Caret /></button>
    <button aria-label="감소"><Caret down /></button>
  </Spinner>
);
const ChevronDown = () => <Icon d="M5 6.500L8 9.500l3-3" w={1.6} />;
const DoubleDown = () => <Icon d="M5.500 4.500L8 7l2.500-2.500M5.500 8.500L8 11l2.500-2.500" />;

const MainToolbar = () => (
  <Toolbar>
    <Tight>
      <ToolButton aria-label="이전"><Icon d="M7.500 5.500L5 8l2.500 2.500M11 5.500L8.500 8l2.500 2.500" /></ToolButton>
      <ToolButton aria-label="펼치기"><DoubleDown /></ToolButton>
    </Tight>
    <Tight>
      <ToolButton>전</ToolButton>
      <ToolButton $w={34} $corner>주식</ToolButton>
    </Tight>
    <Segments>
      <Field $w={44} defaultValue="196170" aria-label="종목코드" />
      <Segment aria-label="최근 종목"><ChevronDown /></Segment>
      <Segment $w={18} aria-label="종목 찾기"><Icon d="M13 6.500a3.500 3.500 0 1 1-7 0a3.500 3.500 0 1 1 7 0zM7 9.500l-4 4" /></Segment>
    </Segments>
    <ToolButton>관</ToolButton>
    <Segments>
      <Segment $w={18}><Ko>승</Ko></Segment>
      <SpinButtons w={20} />
      <Segment $w={10} aria-label="더보기">
        <Icon d="" fill="M7 2.500h2v2H7zM7 7h2v2H7zM7 11.500h2v2H7z" />
      </Segment>
    </Segments>
    <Tight>
      <StockBox><NewBadge>신</NewBadge>알테오젠</StockBox>
      <ToolButton><b>i</b></ToolButton>
    </Tight>
    <Tight>
      <Segments>
        {['일', '주', '월', '분', '틱', '년'].map((p) => (
          <Segment key={p} $on={p === '주'}><Ko>{p}</Ko></Segment>
        ))}
      </Segments>
      <Segments>
        {[1, 3, 5, 10, 30, 60].map((m) => (
          <Segment key={m}>{m}</Segment>
        ))}
      </Segments>
    </Tight>
    <Segments>
      <Field $w={29} $right $dim defaultValue="1" aria-label="주기" />
      <Segment $w={16} aria-label="주기 선택"><ChevronDown /></Segment>
    </Segments>
    <Segments>
      <Field $w={65} defaultValue="2024/06/07" aria-label="조회일" />
      <Segment aria-label="달력">
        <Icon d="M2.500 3.500h11v10h-11zM3 5h10.500M5 8h1M7.500 8h1M10 8h1M5 10.500h1M7.500 10.500h1M10 10.500h1" />
      </Segment>
    </Segments>
    <ToolButton $dim>당</ToolButton>
    <Segments>
      <Field $w={43} $right defaultValue="150" aria-label="표시 개수" />
      <SpinButtons w={15} />
    </Segments>
    <Slash>/</Slash>
    <Tight>
      <Segments>
        <Field $w={43} $right defaultValue="3000" aria-label="전체 개수" />
      </Segments>
      <ToolButton aria-label="추가 조회"><Icon color="#aaa" d={`${MAG_LOW}M11 4.500h5M13.500 2v5`} /></ToolButton>
      <ToolButton $corner aria-label="설정"><Gear /></ToolButton>
    </Tight>
    <Spring />
    <ToolButton $w={9} aria-label="더보기"><Icon d="M5 5.500L7.500 8L5 10.500M8.500 5.500L11 8L8.500 10.500" size={12} /></ToolButton>
  </Toolbar>
);

const App = () => (
  <Desktop>
    <GlobalStyle />
    <WindowBox>
      <TitleBar>
        <TitleBadge $bg="#c86400">1</TitleBadge>
        <TitleBadge $bg="#707070">?</TitleBadge>
        <Title>[9590] <Ko>종합차트</Ko></Title>
        <BareButton aria-label="분리"><Icon color="#bbb" d="M6.500 5.500h8v8h-9v-6M9.500 3.500v2M12.500 3.500v2M2 2l4 4M2 6V2.500h4" /></BareButton>
        <BareButton aria-label="저장"><Icon color="#bbb" d="M2.500 5.500h8v8h-8zM5 5V3.500h8v8h-2M5 3.500V2.500h9.500v8M4.500 9l2 2.500l3-4" w={1.4} /></BareButton>
        <BareButton aria-label="캡처"><Icon color="#bbb" d="M2.500 4.500h11v9h-11zM4 4V2.500h4V4M10.500 9a2.500 2.500 0 1 1-5 0a2.500 2.500 0 1 1 5 0z" /></BareButton>
        <BareButton aria-label="설정"><Gear color="#bbb" thin /></BareButton>
        <BareButton $w={20} aria-label="최소화"><Icon color="#bbb" d="M3 12h10" w={2} /></BareButton>
        <BareButton aria-label="최대화"><Icon color="#bbb" d="M3 3h10v9H3z" w={2} /></BareButton>
        <BareButton aria-label="닫기"><Icon color="#bbb" d="M3.500 3.500l9 9M12.500 3.500l-9 9" w={2} /></BareButton>
      </TitleBar>
      <MainToolbar />
      <Body>
        <Sidebar>
          <Tabs>
            <Tab>종목</Tab>
            <Tab $on>지표</Tab>
            <Tab>전략</Tab>
          </Tabs>
          <SearchRow>
            <Segments>
              <Field $w={120} placeholder="스마트 검색" aria-label="스마트 검색" />
              <Segment aria-label="검색"><Icon d={MAG} /></Segment>
            </Segments>
            <ToolButton aria-label="펼치기"><DoubleDown /></ToolButton>
          </SearchRow>
          <GroupButton>
            <svg width="12" height="12" viewBox="0 0 12 12" aria-hidden="true">
              <path d="M0 1h5v1h6v9H0z" fill="#444" />
              <path d="M3 6.500h5" stroke="#fff" />
            </svg>
            유형
          </GroupButton>
          <Tree>
            <TreeRoot>
              <svg width="5" height="5" viewBox="0 0 5 5" aria-hidden="true">
                <path d="M.5 0v4.500H5" fill="none" stroke="#444" />
              </svg>
              차트유형
            </TreeRoot>
            {treeItems.map((t, i) => (
              <TreeItem key={t}>
                <Radio type="radio" name="chart-type" defaultChecked={i === 0} />
                <span>
                  {t.split(/([A-Za-z&-]+)/).map((part, k) => (k % 2 ? <Latin key={k}>{part}</Latin> : part))}
                </span>
              </TreeItem>
            ))}
          </Tree>
          {groups.map((g) => (
            <GroupButton key={g}>
              <FolderPlus />
              {g}
            </GroupButton>
          ))}
          <SideFooter>
            관심지표
            <Spring />
            <ToolButton $w={38} $dim>등록</ToolButton>
            <ToolButton $w={38} $dim>삭제</ToolButton>
          </SideFooter>
        </Sidebar>

        <ChartFrame>
          <InfoBar>
            <Quote>
              <b>269,000</b>
              <b>▲31,000 +13.03%</b>
              <span>2,841,886</span>
            </Quote>
            <InfoLabel>시</InfoLabel>
            <InfoValue>245,000</InfoValue>
            <InfoLabel>고</InfoLabel>
            <InfoValue>269,000</InfoValue>
            <InfoLabel>저</InfoLabel>
            <InfoValue>240,500</InfoValue>
            <InfoLabel>체결강도</InfoLabel>
            <InfoValue $w={59}>127.42</InfoValue>
            <InfoTools>
              <span>[<Ko>주</Ko>]</span>
              <ToolButton aria-label="차트 설정"><Gear /></ToolButton>
              <OrderButton $c="#d03030">매수</OrderButton>
              <OrderButton $c="#2040d0">매도</OrderButton>
              <MiniStack>
                <button aria-label="최대화"><Square size={5} /></button>
                <button aria-label="닫기"><Cross size={5} /></button>
              </MiniStack>
            </InfoTools>
          </InfoBar>

          <Pane>
            <Plot>
              <PricePlot />
              <Legend>
                <LegendItem $c="#000"><Ko>대기매물</Ko></LegendItem>
                <LegendItem $c="#000" $bold><Ko>알테오젠</Ko></LegendItem>
                <LegendItem $c={MA.m5}><span><Ko>가격이평</Ko> 5</span></LegendItem>
                <LegendItem $c={MA.m10}>10</LegendItem>
                <LegendItem $c={MA.m20}>20</LegendItem>
                <LegendItem $c={MA.m60}>60</LegendItem>
                <LegendItem $c={MA.m120}>120</LegendItem>
                <LegendItem $c={MA.m240}>240</LegendItem>
              </Legend>
            </Plot>
            <Axis>
              <svg>
                {priceTicks.map((y, i) => (
                  <rect key={y} x="0" y={y} width={i % 5 === 0 && i > 0 ? 4 : 2} height="1" fill="#c0c0c0" />
                ))}
                {priceLabels.map((t, i) => (
                  <text key={t} x="52" y={100 + i * 95} textAnchor="end">{t}</text>
                ))}
                <path d="M0 60.500l6-5v11z" fill="#f00000" />
              </svg>
              <LevelTag $y={98}>245,000</LevelTag>
              <LevelTag $y={222}>179,447</LevelTag>
              <LastTag>269,000<br />(13.03%)</LastTag>
              <PaneButtons>
                <button>L</button>
                <button>I</button>
                <button>R</button>
              </PaneButtons>
              <PaneButtons $right>
                <button aria-label="최대화"><Square /></button>
              </PaneButtons>
            </Axis>
          </Pane>

          <Pane $h={42}>
            <Plot>
              <VolumePlot />
              <Legend>
                <LegendItem $c="#000"><Ko>거래량</Ko></LegendItem>
                <LegendItem $c={MA.m5}><span><Ko>거래이평</Ko> 5</span></LegendItem>
                <LegendItem $c={MA.m20}>20</LegendItem>
                <LegendItem $c={MA.m60}>60</LegendItem>
                <LegendItem $c={MA.m120}>120</LegendItem>
              </Legend>
            </Plot>
            <Axis>
              <svg>
                <rect x="0" y="24" width="4" height="1" fill="#c0c0c0" />
                <text x="10" y="28">20,000K</text>
              </svg>
              <SubPaneButtons />
            </Axis>
          </Pane>

          <Pane $h={36}>
            <Plot>
              <RsiPlot />
              <Legend>
                <LegendItem $c="#ff6420">RSI(14,6)</LegendItem>
                <LegendItem $c="#326eff">Signal</LegendItem>
              </Legend>
            </Plot>
            <Axis>
              <svg>
                <rect x="0" y="24" width="4" height="1" fill="#c0c0c0" />
                <text x="10" y="28">60.00</text>
              </svg>
              <SubPaneButtons />
            </Axis>
          </Pane>

          <DateRow>
            <DateTicks>
              <DateLabel $x={1}>2021/07</DateLabel>
              <DateLabel $x={167}>2022/01</DateLabel>
              <DateLabel $x={542}>2023/01</DateLabel>
              <DateLabel $x={917}>2024/01</DateLabel>
            </DateTicks>
            <DateEnd>07/08</DateEnd>
          </DateRow>
          <ScrollRow>
            <ScrollButton $w={17} aria-label="왼쪽"><Icon d="" fill="M10 4v8L6 8z" size={12} color="#000" /></ScrollButton>
            <Track />
            <ScrollButton $w={44} aria-label="스크롤 막대" />
            <ScrollButton $w={17} aria-label="오른쪽"><Icon d="" fill="M6 4v8l4-4z" size={12} color="#000" /></ScrollButton>
            <BottomTools>
              <BareButton aria-label="처음"><Icon d="M4.500 4v8" fill="M12 4v8L7 8z" /></BareButton>
              <BareButton aria-label="일시정지"><Icon d="M6 4.500v7M10 4.500v7" w={2} /></BareButton>
              <BareButton aria-label="끝"><Icon d="M11.500 4v8" fill="M4 4v8l5-4z" /></BareButton>
              <RangeBox>
                <input type="range" min={0} max={100} defaultValue={5} aria-label="배율" />
              </RangeBox>
              {bottomTools.map((t) => (
                <BareButton key={t.name} aria-label={t.name}>{t.node}</BareButton>
              ))}
            </BottomTools>
          </ScrollRow>
        </ChartFrame>

        <RightBar>
          {rightTools.map((t) => (
            <RightButton key={t.name} $line={t.line} $on={t.on} aria-label={t.name}>{t.node}</RightButton>
          ))}
        </RightBar>
      </Body>
    </WindowBox>
    <WindowEdge />
  </Desktop>
);

export default App;
